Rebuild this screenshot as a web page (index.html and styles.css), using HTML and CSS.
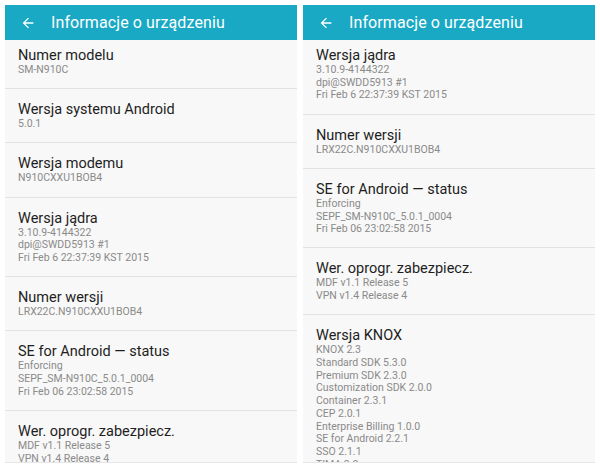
FILE: index.html
```html
<!DOCTYPE html>
<html lang="pl">
<head>
<meta charset="utf-8">
<title>Informacje o urządzeniu</title>
<link rel="stylesheet" href="styles.css">
</head>
<body>
<div class="wrap">
  <section class="phone">
    <header class="bar">
      <svg class="back" viewBox="0 0 24 24" width="16" height="16"><path d="M20 11H7.83l5.59-5.59L12 4l-8 8 8 8 1.41-1.41L7.83 13H20v-2z" fill="#fff"/></svg>
      <h1 class="bar-title">Informacje o urządzeniu</h1>
    </header>
    <div class="viewport">
      <ul class="list">
        <li class="item"><div class="title">Numer modelu</div><div class="sub">SM-N910C</div></li>
        <li class="item"><div class="title">Wersja systemu Android</div><div class="sub">5.0.1</div></li>
        <li class="item"><div class="title">Wersja modemu</div><div class="sub">N910CXXU1BOB4</div></li>
        <li class="item"><div class="title">Wersja jądra</div><div class="sub">3.10.9-4144322</div><div class="sub">dpi@SWDD5913 #1</div><div class="sub">Fri Feb 6 22:37:39 KST 2015</div></li>
        <li class="item"><div class="title">Numer wersji</div><div class="sub">LRX22C.N910CXXU1BOB4</div></li>
        <li class="item"><div class="title">SE for Android — status</div><div class="sub">Enforcing</div><div class="sub">SEPF_SM-N910C_5.0.1_0004</div><div class="sub">Fri Feb 06 23:02:58 2015</div></li>
        <li class="item"><div class="title">Wer. oprogr. zabezpiecz.</div><div class="sub">MDF v1.1 Release 5</div><div class="sub">VPN v1.4 Release 4</div></li>
      </ul>
    </div>
  </section>
  <section class="phone">
    <header class="bar">
      <svg class="back" viewBox="0 0 24 24" width="16" height="16"><path d="M20 11H7.83l5.59-5.59L12 4l-8 8 8 8 1.41-1.41L7.83 13H20v-2z" fill="#fff"/></svg>
      <h1 class="bar-title">Informacje o urządzeniu</h1>
    </header>
    <div class="viewport">
      <ul class="list">
        <li class="item"><div class="title">Wersja jądra</div><div class="sub">3.10.9-4144322</div><div class="sub">dpi@SWDD5913 #1</div><div class="sub">Fri Feb 6 22:37:39 KST 2015</div></li>
        <li class="item"><div class="title">Numer wersji</div><div class="sub">LRX22C.N910CXXU1BOB4</div></li>
        <li class="item"><div class="title">SE for Android — status</div><div class="sub">Enforcing</div><div class="sub">SEPF_SM-N910C_5.0.1_0004</div><div class="sub">Fri Feb 06 23:02:58 2015</div></li>
        <li class="item"><div class="title">Wer. oprogr. zabezpiecz.</div><div class="sub">MDF v1.1 Release 5</div><div class="sub">VPN v1.4 Release 4</div></li>
        <li class="item"><div class="title">Wersja KNOX</div><div class="sub">KNOX 2.3</div><div class="sub">Standard SDK 5.3.0</div><div class="sub">Premium SDK 2.3.0</div><div class="sub">Customization SDK 2.0.0</div><div class="sub">Container 2.3.1</div><div class="sub">CEP 2.0.1</div><div class="sub">Enterprise Billing 1.0.0</div><div class="sub">SE for Android 2.2.1</div><div class="sub">SSO 2.1.1</div><div class="sub">TIMA 3.0</div></li>
      </ul>
    </div>
  </section>
</div>
</body>
</html>
```

FILE: styles.css
```css
* { box-sizing: border-box; }
html, body { margin: 0; padding: 0; background: #ffffff; }
body { font-family: Roboto, "Noto Sans", "Liberation Sans", sans-serif; }

.wrap {
  display: flex;
  gap: 6px;
  padding: 5px;
  width: 600px;
  height: 468px;
}

.phone {
  width: 292px;
  height: 458px;
  display: flex;
  flex-direction: column;
  background: #f8f8f8;
  border-bottom: 1px solid #e6e6e6;
}

.bar {
  height: 35px;
  flex: none;
  background: #19a9c4;
  display: flex;
  align-items: center;
  padding-left: 15px;
}

.back { width: 16px; height: 16px; flex: none; }

.bar-title {
  margin: 0 0 0 15px;
  font-weight: 400;
  font-size: 16px;
  color: #ffffff;
  letter-spacing: 0.1px;
}

.viewport {
  flex: 1;
  overflow: hidden;
}

.list {
  list-style: none;
  margin: -5px 0 0 0;
  padding: 0;
}

.item {
  padding: 12px 13px 11.5px 13px;
  border-bottom: 1px solid #e2e2e2;
}

.title {
  font-size: 14.5px;
  line-height: 17px;
  color: #1e1e1e;
}

.sub {
  font-size: 10.5px;
  line-height: 12.7px;
  color: #8a8a8a;
}
```
